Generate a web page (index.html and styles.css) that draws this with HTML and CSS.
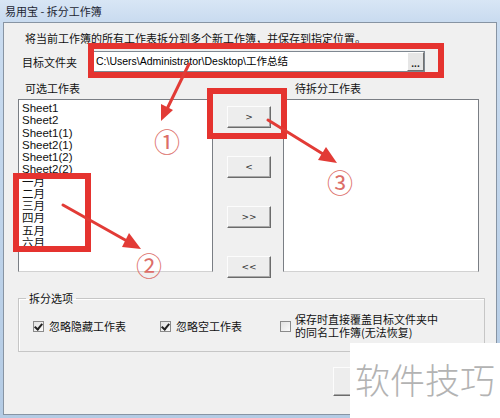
FILE: index.html
```html
<!DOCTYPE html>
<html lang="zh-CN">
<head>
  <meta charset="UTF-8">
  <title>易用宝 - 拆分工作簿</title>
  <link rel="stylesheet" href="styles.css">
</head>
<body>
  <div class="window">
    <div class="titlebar">易用宝 - 拆分工作簿</div>
    <div class="client">
      <p class="intro">将当前工作簿的所有工作表拆分到多个新工作簿，并保存到指定位置。</p>

      <div class="path-row">
        <span class="path-label">目标文件夹</span>
        <div class="path-box">
          <span class="path-text">C:\Users\Administrator\Desktop\工作总结</span>
          <span class="browse">...</span>
        </div>
      </div>

      <div class="lists">
        <div class="list-label">可选工作表</div>
        <div></div>
        <div class="list-label right">待拆分工作表</div>

        <ul class="listbox">
          <li>Sheet1</li>
          <li>Sheet2</li>
          <li>Sheet1(1)</li>
          <li>Sheet2(1)</li>
          <li>Sheet1(2)</li>
          <li>Sheet2(2)</li>
          <li>一月</li>
          <li>二月</li>
          <li>三月</li>
          <li>四月</li>
          <li>五月</li>
          <li>六月</li>
        </ul>
        <div class="mover">
          <span class="btn">&gt;</span>
          <span class="btn">&lt;</span>
          <span class="btn">&gt;&gt;</span>
          <span class="btn">&lt;&lt;</span>
        </div>
        <ul class="listbox"></ul>
      </div>

      <fieldset class="options">
        <legend>拆分选项</legend>
        <div class="option-row">
          <label class="check"><span class="box on"></span>忽略隐藏工作表</label>
          <label class="check"><span class="box on"></span>忽略空工作表</label>
          <label class="check"><span class="box"></span><span class="two-line">保存时直接覆盖目标文件夹中<br>的同名工作簿(无法恢复)</span></label>
        </div>
      </fieldset>

      <div class="actions">
        <span class="btn big"></span>
      </div>
    </div>
  </div>

  <svg class="marks" width="500" height="418" viewBox="0 0 500 418">
    <g fill="none" stroke="#e5332f" stroke-width="6">
      <rect x="91" y="46" width="350" height="29"/>
      <rect x="210" y="91" width="74" height="45"/>
      <rect x="16" y="176" width="72" height="73"/>
    </g>
    <g stroke="#e23b36" stroke-width="3" stroke-linecap="round">
      <line x1="189" y1="64" x2="167" y2="109"/>
      <line x1="63" y1="205" x2="127" y2="241"/>
      <line x1="268" y1="120" x2="323" y2="154"/>
    </g>
    <g fill="#e23b36">
      <polygon points="161,121 173,110 161,104"/>
      <polygon points="141,249 122,247 129,233"/>
      <polygon points="337,163 318,160 326,147"/>
    </g>
    <g class="num" fill="#dc6e68" text-anchor="middle" dominant-baseline="central">
      <text x="167" y="140">①</text>
      <text x="149" y="264">②</text>
      <text x="340" y="181">③</text>
    </g>
  </svg>

  <div class="watermark">软件技巧</div>
</body>
</html>
```

FILE: styles.css
```css
body {
  margin: 0;
  width: 500px;
  height: 418px;
  overflow: hidden;
  position: relative;
  font-family: "Liberation Sans", "Noto Sans CJK SC", sans-serif;
  font-size: 11px;
  color: #111;
  background: #b9cfe7;
}

.window {
  display: flex;
  flex-direction: column;
  height: 418px;
  padding: 0 3px 3px 3px;
  box-sizing: border-box;
  background: linear-gradient(180deg, #d8e6f5 0%, #cadcf0 20px, #b4cbe4 100%);
}

.titlebar {
  height: 22px;
  line-height: 22px;
  padding-left: 2px;
  font-family: "Noto Sans CJK SC", sans-serif;
  font-size: 11px;
  color: #1d2633;
}

.client {
  flex: 1;
  border: 1px solid #8794a3;
  background: #f0f0f0;
  padding: 7px 0 0 14px;
}

.intro {
  margin: 0;
  padding-left: 7px;
  line-height: 16px;
  font-family: "Noto Sans CJK SC", sans-serif;
}

.path-row {
  display: flex;
  align-items: center;
  margin-top: 5px;
  height: 21px;
}

.path-label {
  width: 71px;
  padding-left: 4px;
  font-family: "Noto Sans CJK SC", sans-serif;
}

.path-box {
  display: flex;
  width: 332px;
  height: 21px;
  box-sizing: border-box;
  border: 1px solid #7f8891;
  background: #fff;
}

.path-text {
  flex: 1;
  line-height: 19px;
  padding-left: 2px;
  font-size: 10.5px;
  color: #000;
}

.browse {
  width: 15px;
  border: 1px solid;
  border-color: #fff #707070 #707070 #fff;
  background: #e6e6e6;
  font-weight: bold;
  font-size: 10px;
  line-height: 22px;
  text-align: center;
  color: #222;
}

.lists {
  display: grid;
  grid-template-columns: 195px 70px 196px;
  grid-template-rows: 16px 173px;
  row-gap: 3px;
  margin-top: 8px;
}

.list-label {
  line-height: 16px;
  padding-left: 7px;
  font-family: "Noto Sans CJK SC", sans-serif;
}

.list-label.right {
  padding-left: 12px;
}

.listbox {
  margin: 0;
  padding: 2px 0 0 3px;
  list-style: none;
  background: #fff;
  border: 1px solid #7a7e84;
  border-bottom-color: #d2d2d2;
}

.listbox li {
  height: 12.27px;
  line-height: 12px;
  font-size: 11.5px;
  white-space: nowrap;
}

.mover {
  display: flex;
  flex-direction: column;
  gap: 28px;
  padding: 7px 0 0 14px;
}

.btn {
  display: block;
  width: 44px;
  height: 22px;
  box-sizing: border-box;
  border: 1px solid;
  border-color: #fcfcfc #6b6b6b #6b6b6b #fcfcfc;
  box-shadow: inset -1px -1px #a9a9a9;
  background: #ededed;
  text-align: center;
  line-height: 20px;
  font-family: "DejaVu Sans", sans-serif;
  font-size: 9px;
  color: #333;
}

.options {
  width: 467px;
  box-sizing: border-box;
  margin: 18px 0 0 0;
  padding: 0 0 12px 7px;
  border: 1px solid #c6c6c6;
  box-shadow: inset 1px 1px #fff;
}

.options legend {
  padding: 0 3px;
  line-height: 16px;
  font-family: "Noto Sans CJK SC", sans-serif;
}

.option-row {
  display: grid;
  grid-template-columns: 127px 120px auto;
  align-items: center;
  height: 26px;
  margin-top: 7px;
  padding-left: 7px;
}

.check {
  display: flex;
  align-items: center;
  font-family: "Noto Sans CJK SC", sans-serif;
}

.box {
  width: 11px;
  height: 11px;
  box-sizing: border-box;
  margin-right: 5px;
  border: 1px solid #8a8a8a;
  background: linear-gradient(135deg, #e2e2e2, #fafafa);
  position: relative;
}

.box.on::after {
  content: "";
  position: absolute;
  left: 2px;
  top: 0px;
  width: 3px;
  height: 6px;
  border: solid #222;
  border-width: 0 2px 2px 0;
  transform: rotate(40deg);
}

.two-line {
  line-height: 13px;
  margin-left: -1px;
}

.actions {
  padding: 15px 0 0 315px;
}

.btn.big {
  width: 75px;
  height: 29px;
}

.marks {
  position: absolute;
  left: 0;
  top: 0;
}

.marks .num {
  font-family: "Noto Sans CJK SC", sans-serif;
  font-size: 26px;
}

.watermark {
  position: absolute;
  left: 350px;
  top: 343px;
  width: 150px;
  height: 75px;
  background: #fff;
  padding-left: 5px;
  box-sizing: border-box;
  line-height: 72px;
  font-family: "Noto Sans CJK SC", sans-serif;
  font-weight: 300;
  font-size: 35px;
  color: #b3b3b3;
  white-space: nowrap;
}
```
